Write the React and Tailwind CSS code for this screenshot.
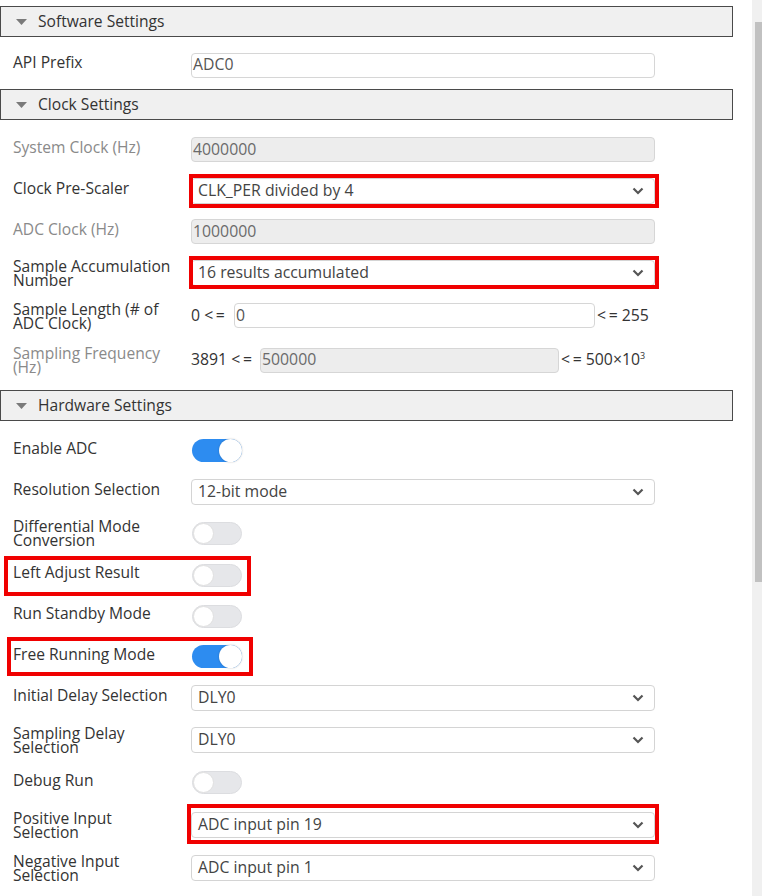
import React from "react";

const FONT = { fontFamily: '"Open Sans", "Noto Sans", sans-serif' };

function Triangle() {
  return (
    <svg width="11" height="6" viewBox="0 0 11 6" className="shrink-0">
      <polygon points="0,0 11,0 5.5,6" fill="#7a7a7a" />
    </svg>
  );
}

function Chevron() {
  return (
    <svg width="12" height="8" viewBox="0 0 12 8" className="shrink-0">
      <polyline points="1.5,1.5 6,6 10.5,1.5" fill="none" stroke="#555" strokeWidth="2.2" />
    </svg>
  );
}

function Header({ title }) {
  return (
    <div className="w-[733px] h-[31px] border-[1.5px] border-[#4a4a4a] bg-[#f0f0f0] flex items-center gap-[11px] pl-[15px] shrink-0">
      <Triangle />
      <span className="text-[15.6px] text-[#333]">{title}</span>
    </div>
  );
}

function Row({ h, label, twoLine, muted, children, pt, highlight }) {
  return (
    <div className={`relative flex items-center shrink-0 ${h} ${pt || ""}`}>
      <div className="w-[191px] shrink-0 pl-[13px]">
        <div
          className={`w-[163px] text-[15.6px] ${twoLine ? "leading-[14px]" : "leading-[20px] mb-[6px]"} ${muted ? "text-[#8a8a8a]" : "text-[#333]"}`}
        >
          {label}
        </div>
      </div>
      {children}
      {highlight && (
        <div className={`absolute border-[4px] border-[#f00000] pointer-events-none ${highlight}`} />
      )}
    </div>
  );
}

function TextInput({ value, disabled, w = "w-[464px]" }) {
  return (
    <div
      className={`${w} h-[25px] rounded-[4px] border border-[#d6d6d6] flex items-center pl-[1px] text-[15.8px] ${disabled ? "bg-[#ededed] text-[#6a6a6a]" : "bg-white text-[#555]"}`}
    >
      {value}
    </div>
  );
}

function Select({ value }) {
  return (
    <div className="w-[464px] h-[26px] rounded-[4px] border border-[#d4d4d4] bg-white flex items-center justify-between pl-[6px] pr-[10px] text-[15.8px] text-[#444]">
      <span>{value}</span>
      <Chevron />
    </div>
  );
}

function Toggle({ on }) {
  return (
    <div
      className={`ml-[1px] w-[50px] h-[23px] rounded-full flex ${on ? "bg-[#2d8cf0] justify-end" : "bg-[#e6e7ea] justify-start border border-[#dcdde0]"}`}
    >
      <div
        className={`h-full aspect-square rounded-full bg-white ${on ? "shadow-[0_0_2px_rgba(0,0,0,0.25)]" : "border border-[#e0e0e0]"}`}
      />
    </div>
  );
}

export default function App() {
  return (
    <div className="w-[762px] h-[896px] bg-white overflow-hidden flex" style={FONT}>
      <div className="w-[752px] flex flex-col pt-[6px]">
        <Header title="Software Settings" />
        <Row h="h-[52px]" pt="pt-[4px]" label="API Prefix">
          <TextInput value="ADC0" />
        </Row>
        <Header title="Clock Settings" />
        <div className="h-[9px] shrink-0" />
        <Row h="h-[41px]" label="System Clock (Hz)" muted>
          <TextInput value="4000000" disabled />
        </Row>
        <Row h="h-[41px]" label="Clock Pre-Scaler" highlight="left-[189px] top-[4px] w-[470px] h-[34px]">
          <Select value="CLK_PER divided by 4" />
        </Row>
        <Row h="h-[41px]" label="ADC Clock (Hz)" muted>
          <TextInput value="1000000" disabled />
        </Row>
        <Row h="h-[41px]" label="Sample Accumulation Number" twoLine highlight="left-[189px] top-[4px] w-[470px] h-[33px]">
          <Select value="16 results accumulated" />
        </Row>
        <Row h="h-[45px]" label="Sample Length (# of ADC Clock)" twoLine>
          <div className="flex items-center text-[15.8px] text-[#333]">
            <span className="w-[43px]">0 &lt;&thinsp;=</span>
            <TextInput value="0" w="w-[361px]" />
            <span className="ml-[2px]">&lt;&thinsp;= 255</span>
          </div>
        </Row>
        <Row h="h-[44px]" label="Sampling Frequency (Hz)" twoLine muted>
          <div className="flex items-center text-[15.8px] text-[#333]">
            <span className="w-[69px]">3891 &lt;&thinsp;=</span>
            <TextInput value="500000" disabled w="w-[299px]" />
            <span className="ml-[2px]">
              &lt;&thinsp;= 500×10<sup className="text-[9px] -top-[6px]">3</sup>
            </span>
          </div>
        </Row>
        <div className="h-[8px] shrink-0" />
        <Header title="Hardware Settings" />
        <div className="h-[9px] shrink-0" />
        <Row h="h-[41px]" label="Enable ADC">
          <Toggle on />
        </Row>
        <Row h="h-[41px]" label="Resolution Selection">
          <Select value="12-bit mode" />
        </Row>
        <Row h="h-[42px]" label="Differential Mode Conversion" twoLine>
          <Toggle />
        </Row>
        <Row h="h-[42px]" label="Left Adjust Result" highlight="left-[4px] top-[2px] w-[247px] h-[40px]">
          <Toggle />
        </Row>
        <Row h="h-[40px]" label="Run Standby Mode">
          <Toggle />
        </Row>
        <Row h="h-[41px]" label="Free Running Mode" highlight="left-[7px] top-[1px] w-[246px] h-[39px]">
          <Toggle on />
        </Row>
        <Row h="h-[42px]" label="Initial Delay Selection">
          <Select value="DLY0" />
        </Row>
        <Row h="h-[42px]" label="Sampling Delay Selection" twoLine>
          <Select value="DLY0" />
        </Row>
        <Row h="h-[43px]" label="Debug Run">
          <Toggle />
        </Row>
        <Row h="h-[42px]" label="Positive Input Selection" twoLine highlight="left-[187px] top-[0px] w-[472px] h-[40px]">
          <Select value="ADC input pin 19" />
        </Row>
        <Row h="h-[44px]" label="Negative Input Selection" twoLine>
          <Select value="ADC input pin 1" />
        </Row>
      </div>
      <div className="w-[10px] h-full bg-[#f0f0f0] flex flex-col">
        <div className="ml-[3px] mt-[22px] w-[7px] h-[560px] bg-[#c1c1c1]" />
      </div>
    </div>
  );
}
